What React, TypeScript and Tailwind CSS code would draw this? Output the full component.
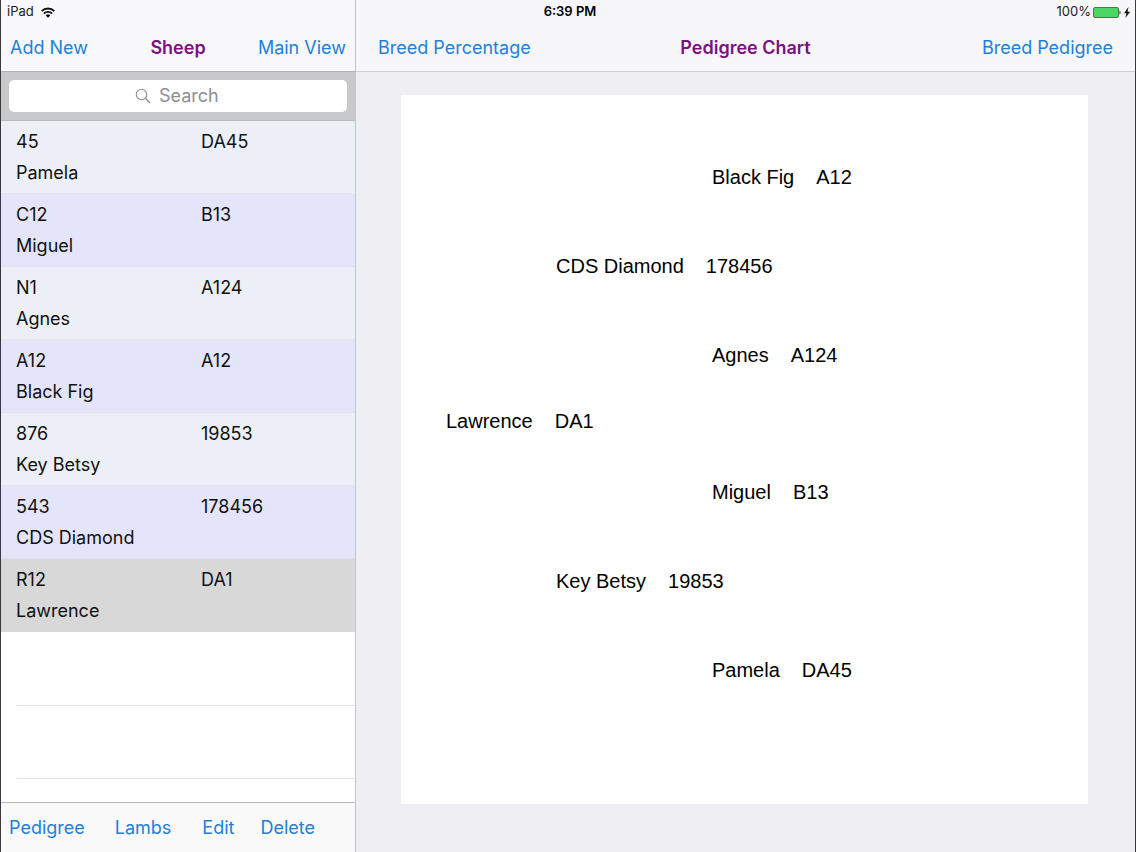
const sheep = [
  { id: 'pamela', ear: '45', tag: 'DA45', name: 'Pamela' },
  { id: 'miguel', ear: 'C12', tag: 'B13', name: 'Miguel' },
  { id: 'agnes', ear: 'N1', tag: 'A124', name: 'Agnes' },
  { id: 'blackfig', ear: 'A12', tag: 'A12', name: 'Black Fig' },
  { id: 'keybetsy', ear: '876', tag: '19853', name: 'Key Betsy' },
  { id: 'diamond', ear: '543', tag: '178456', name: 'CDS Diamond' },
  { id: 'lawrence', ear: 'R12', tag: 'DA1', name: 'Lawrence' },
];

const selectedId = 'lawrence';

// indentation grows with each generation
const pedigree = [
  { name: 'Black Fig', tag: 'A12', className: 'mt-[70px] pl-[311px]' },
  { name: 'CDS Diamond', tag: '178456', className: 'mt-[65px] pl-[155px]' },
  { name: 'Agnes', tag: 'A124', className: 'mt-[65px] pl-[311px]' },
  { name: 'Lawrence', tag: 'DA1', className: 'mt-[42px] pl-[45px]' },
  { name: 'Miguel', tag: 'B13', className: 'mt-[47px] pl-[311px]' },
  { name: 'Key Betsy', tag: '19853', className: 'mt-[65px] pl-[155px]' },
  { name: 'Pamela', tag: 'DA45', className: 'mt-[65px] pl-[311px]' },
];

function rowColor(id: string, index: number) {
  if (id === selectedId) return 'bg-[#d8d8d8] border-[#d8d8d8]';
  return index % 2 ? 'bg-[#e4e5fa] border-[#dfe0f0]' : 'bg-[#ecf0f6] border-[#e2e5ee]';
}

function WifiIcon() {
  return (
    <svg className="h-[11px] w-[14px]" viewBox="0 0 14 11" fill="none" stroke="#111" strokeWidth="1.8">
      <path d="M0.7 4.1a8.9 8.9 0 0 1 12.6 0" />
      <path d="M2.9 6.6a5.8 5.8 0 0 1 8.2 0" />
      <path d="M7 10.8 4.7 8.5a3.2 3.2 0 0 1 4.6 0z" fill="#111" stroke="none" />
    </svg>
  );
}

function BatteryIcon() {
  return (
    <svg className="h-[11px] w-[38px]" viewBox="0 0 38 11">
      <rect x="0.5" y="0.5" width="25" height="10" rx="1.5" fill="#4cd663" stroke="#5a6b5c" />
      <path d="M26.5 3.5c1.3.3 1.3 3.7 0 4z" fill="#222" />
      <path d="M35.5 0 31 6.2h2.5L32.3 11 37.2 4.7h-2.7z" fill="#111" />
    </svg>
  );
}

function StatusBar() {
  return (
    <div className="pointer-events-none absolute inset-x-0 top-0 grid h-6 grid-cols-3 items-center pr-1 pl-[6px] text-[13px] text-[#222]">
      <div className="flex items-center gap-[7px]">
        <span>iPad</span>
        <WifiIcon />
      </div>
      <span className="pl-[2px] text-center font-semibold text-black">6:39 PM</span>
      <div className="flex items-center justify-end gap-[2px]">
        <span>100%</span>
        <BatteryIcon />
      </div>
    </div>
  );
}

function Sidebar() {
  return (
    <aside className="flex w-[355px] shrink-0 flex-col border-r border-[#c4c4c8] bg-white">
      <header className="grid h-[72px] grid-cols-[1fr_auto_1fr] items-center border-b border-[#b4b4b6] bg-[#f8f7fa] px-[9px] pt-6">
        <button className="justify-self-start text-[#1f80d6]">Add New</button>
        <h1 className="font-semibold text-[#7b1080]">Sheep</h1>
        <button className="justify-self-end text-[#1f80d6]">Main View</button>
      </header>

      <div className="border-b border-[#b9b9bb] bg-[#c9c9cb] p-2">
        <label className="flex h-8 items-center justify-center gap-2 rounded-[5px] bg-white">
          <svg className="h-4 w-4" viewBox="0 0 16 16" fill="none" stroke="#8e8e93" strokeWidth="1.1">
            <circle cx="6.5" cy="6.5" r="5.2" />
            <path d="m10.3 10.3 4.8 4.8" strokeWidth="1.4" />
          </svg>
          <input
            type="text"
            role="searchbox"
            aria-label="Search"
            placeholder="Search"
            className="w-[62px] bg-transparent leading-6 outline-none placeholder:text-[#8e8e93]"
          />
        </label>
      </div>

      <ul>
        {sheep.map((s, i) => (
          <li key={s.id}>
            <button
              className={`grid w-full grid-cols-[185px_1fr] border-b pt-[5px] pb-[5px] pl-[15px] text-left leading-[31px] text-[#111] ${rowColor(s.id, i)}`}
            >
              <span>{s.ear}</span>
              <span>{s.tag}</span>
              <span>{s.name}</span>
            </button>
          </li>
        ))}
      </ul>
      <div className="ml-4 h-[74px] border-b border-[#e2e2e4]" />
      <div className="ml-4 h-[73px] border-b border-[#e2e2e4]" />

      <footer className="mt-auto flex h-[50px] items-center border-t border-[#b8b8ba] bg-[#f9f9f9] pl-2 text-[#1f80d6]">
        <button className="mr-[30px]">Pedigree</button>
        <button className="mr-[31px]">Lambs</button>
        <button className="mr-[26px]">Edit</button>
        <button>Delete</button>
      </footer>
    </aside>
  );
}

function PedigreePane() {
  return (
    <main className="flex min-w-0 flex-1 flex-col bg-[#efeef3]">
      <header className="grid h-[72px] grid-cols-[1fr_auto_1fr] items-center border-b border-[#cfced3] bg-[#f7f6f9] px-[22px] pt-6">
        <button className="justify-self-start text-[#1f80d6]">Breed Percentage</button>
        <h2 className="font-semibold text-[#7b1080]">Pedigree Chart</h2>
        <button className="justify-self-end text-[#1f80d6]">Breed Pedigree</button>
      </header>

      <div className="flex flex-1 pt-[23px] pr-[47px] pb-12 pl-[45px]">
        <ul className="flex-1 bg-white font-['Liberation_Sans',Arial,sans-serif] text-[20px] leading-6 text-black">
          {pedigree.map((p) => (
            <li key={p.name} className={`flex gap-[22px] ${p.className}`}>
              <span>{p.name}</span>
              <span>{p.tag}</span>
            </li>
          ))}
        </ul>
      </div>
    </main>
  );
}

export default function App() {
  return (
    <div className="relative flex min-h-screen border-x border-[#3a3840] font-[Inter,sans-serif] text-[18px]">
      <Sidebar />
      <PedigreePane />
      <StatusBar />
    </div>
  );
}
